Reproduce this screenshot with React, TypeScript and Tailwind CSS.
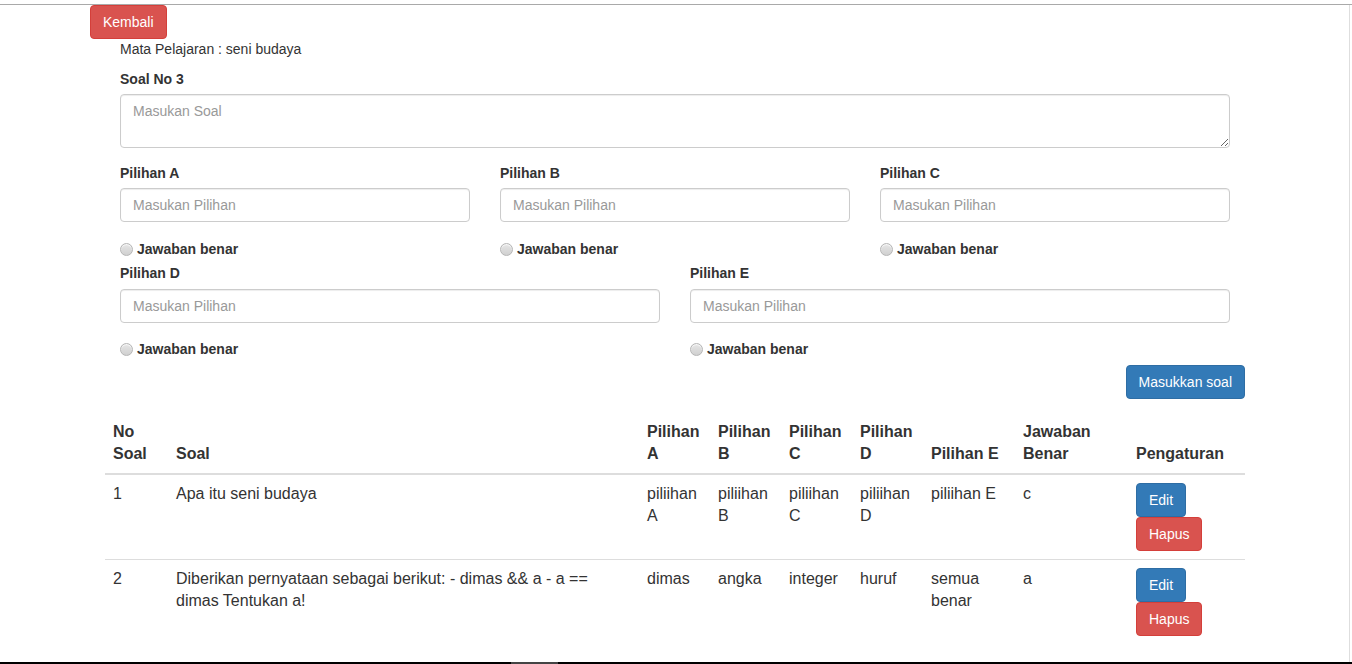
import React from 'react';

const rows = [
  {
    no: '1',
    soal: 'Apa itu seni budaya',
    a: 'piliihan A',
    b: 'piliihan B',
    c: 'piliihan C',
    d: 'piliihan D',
    e: 'piliihan E',
    benar: 'c',
  },
  {
    no: '2',
    soal: 'Diberikan pernyataan sebagai berikut: - dimas && a - a == dimas Tentukan a!',
    a: 'dimas',
    b: 'angka',
    c: 'integer',
    d: 'huruf',
    e: 'semua benar',
    benar: 'a',
  },
];

function Radio() {
  return (
    <label className="flex items-center gap-[4px] text-sm font-bold leading-5 text-[#333]">
      <span className="block w-[13px] h-[13px] rounded-full border border-[#b5b5b5] bg-gradient-to-b from-[#e6e6e6] to-[#d0d0d0] shadow-[inset_0_1px_1px_rgba(255,255,255,0.8)]" />
      Jawaban benar
    </label>
  );
}

// baris pertama dan kedua beda sedikit jaraknya
function Pilihan({ label, second }: { label: string; second?: boolean }) {
  return (
    <div className="px-[15px]">
      <div className={`text-sm font-bold leading-5 text-[#333] ${second ? 'mb-[6px]' : 'mb-[5px]'}`}>{label}</div>
      <input
        placeholder="Masukan Pilihan"
        className="block w-full h-[34px] px-3 text-sm text-[#555] border border-[#ccc] rounded-[4px] shadow-[inset_0_1px_1px_rgba(0,0,0,0.075)] placeholder:text-[#999] outline-none"
      />
      <div className={second ? 'mt-[16px]' : 'mt-[17px]'}>
        <Radio />
      </div>
    </div>
  );
}

export default function App() {
  return (
    <div className="w-[1352px] h-[664px] bg-white flex flex-col overflow-hidden font-['Liberation_Sans',Arial,sans-serif] text-[#333]">
      <div className="h-[4px] shrink-0" />
      <div className="h-px shrink-0 bg-[#a9a9a9]" />

      <div className="flex-1 min-h-0 flex">
        <div className="w-[1350px] border-r border-[#dedede] overflow-hidden">
          {/* Tombol kembali */}
          <div className="pl-[90px]">
            <button className="h-[34px] px-3 text-sm text-white bg-[#d9534f] border border-[#d43f3a] rounded-[4px]">
              Kembali
            </button>
          </div>

          <div className="ml-[105px] w-[1140px]">
            <div className="px-[15px]">
              <p className="text-sm leading-5">Mata Pelajaran : seni budaya</p>
              <div className="mt-[10px] mb-[5px] text-sm font-bold leading-5">Soal No 3</div>
              <textarea
                placeholder="Masukan Soal"
                className="block w-full h-[54px] px-3 py-[6px] text-sm leading-5 border border-[#ccc] rounded-[4px] shadow-[inset_0_1px_1px_rgba(0,0,0,0.075)] placeholder:text-[#999] outline-none"
              />
            </div>

            <div className="grid grid-cols-3 mt-[15px]">
              <Pilihan label="Pilihan A" />
              <Pilihan label="Pilihan B" />
              <Pilihan label="Pilihan C" />
            </div>

            <div className="grid grid-cols-2 mt-[4px]">
              <Pilihan label="Pilihan D" second />
              <Pilihan label="Pilihan E" second />
            </div>

            <div className="flex justify-end mt-[6px]">
              <button className="h-[34px] px-3 text-sm text-white bg-[#337ab7] border border-[#2e6da4] rounded-[4px]">
                Masukkan soal
              </button>
            </div>

            {/* Tabel soal */}
            <table className="w-full mt-[14px] table-fixed border-collapse text-base leading-[22px]">
              <thead>
                <tr className="border-b-2 border-[#ddd] text-left align-bottom">
                  <th className="w-[63px] p-2 font-bold">No Soal</th>
                  <th className="w-[471px] p-2 font-bold">Soal</th>
                  <th className="w-[71px] p-2 font-bold">Pilihan A</th>
                  <th className="w-[71px] p-2 font-bold">Pilihan B</th>
                  <th className="w-[71px] p-2 font-bold">Pilihan C</th>
                  <th className="w-[71px] p-2 font-bold">Pilihan D</th>
                  <th className="w-[92px] p-2 font-bold">Pilihan E</th>
                  <th className="w-[113px] p-2 font-bold">Jawaban Benar</th>
                  <th className="w-[117px] p-2 font-bold">Pengaturan</th>
                </tr>
              </thead>
              <tbody>
                {rows.map((r, i) => (
                  <tr key={r.no} className={`align-top ${i > 0 ? 'border-t border-[#ddd]' : ''}`}>
                    <td className="p-2">{r.no}</td>
                    <td className="p-2">{r.soal}</td>
                    <td className="p-2">{r.a}</td>
                    <td className="p-2">{r.b}</td>
                    <td className="p-2">{r.c}</td>
                    <td className="p-2">{r.d}</td>
                    <td className="p-2">{r.e}</td>
                    <td className="p-2">{r.benar}</td>
                    <td className="p-2">
                      <div className="flex flex-col items-start">
                        <button className="h-[34px] px-3 text-sm text-white bg-[#337ab7] border border-[#2e6da4] rounded-[4px]">
                          Edit
                        </button>
                        <button className="h-[34px] px-3 text-sm text-white bg-[#d9534f] border border-[#d43f3a] rounded-[4px]">
                          Hapus
                        </button>
                      </div>
                    </td>
                  </tr>
                ))}
              </tbody>
            </table>
          </div>
        </div>
      </div>

      <div className="h-[2px] shrink-0 bg-black flex">
        <div className="ml-[511px] w-[47px] bg-[#444]" />
      </div>
    </div>
  );
}
